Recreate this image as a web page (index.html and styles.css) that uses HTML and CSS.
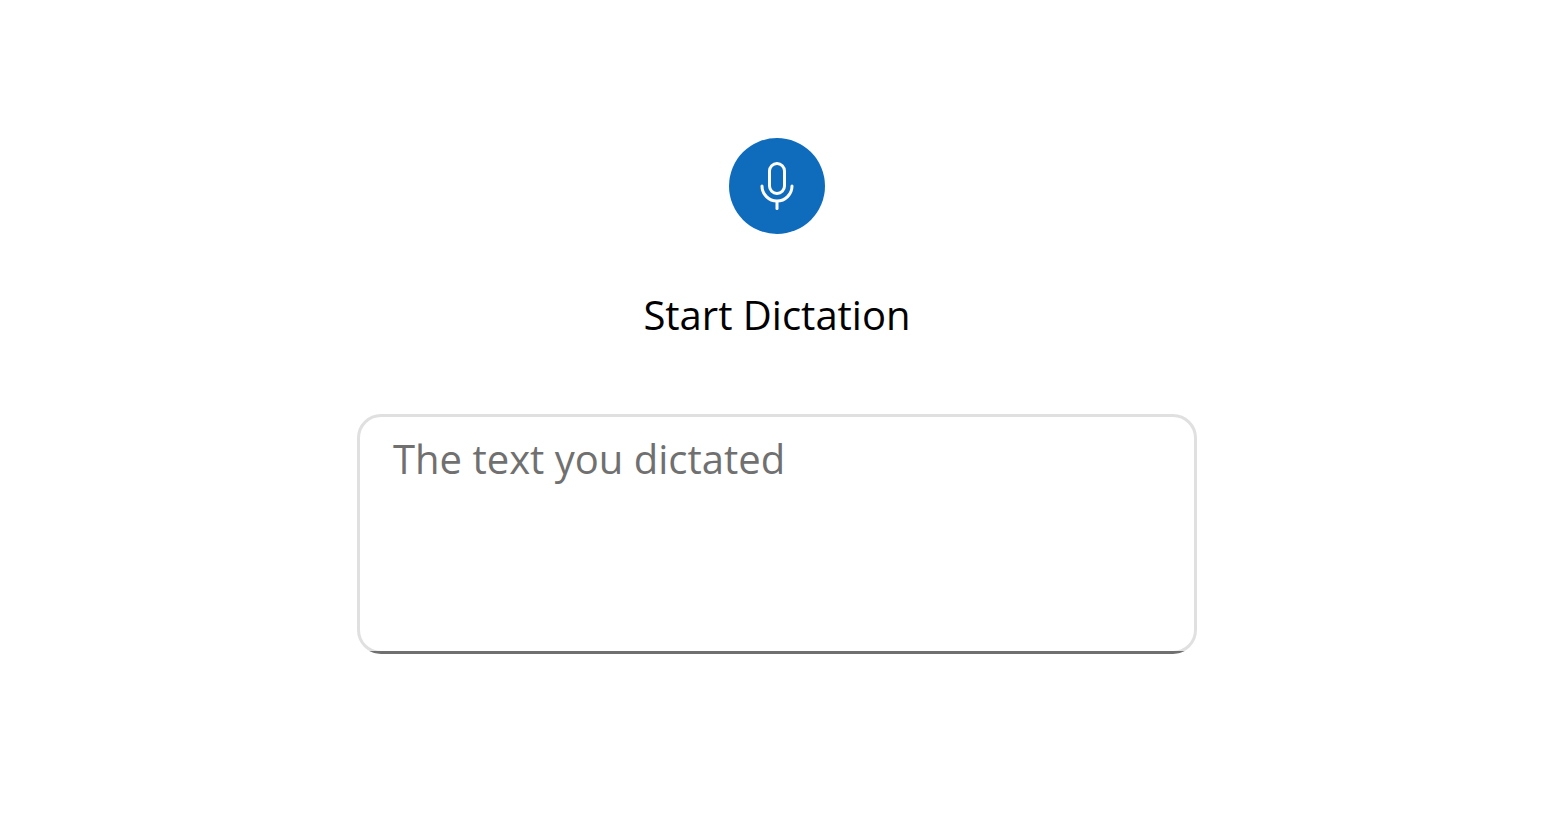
FILE: index.html
```html
<!DOCTYPE html>
<html lang="en">
<head>
<meta charset="utf-8">
<title>Dictation</title>
<link rel="stylesheet" href="styles.css">
</head>
<body>
<main class="dictation">
  <button class="mic-button" type="button" aria-labelledby="mic-label">
    <svg class="mic-icon" viewBox="0 0 48 48" fill="none" stroke="currentColor" stroke-width="3" stroke-linecap="round" aria-hidden="true">
      <rect x="16.500" y="1.500" width="15" height="30" rx="7.500"/>
      <path d="M9 24a15 15 0 0 0 30 0"/>
      <path d="M24 39.500V46.500"/>
    </svg>
  </button>
  <label class="mic-label" id="mic-label" for="dictated">Start Dictation</label>
  <div class="field">
    <textarea class="field-input" id="dictated" placeholder="The text you dictated"></textarea>
  </div>
</main>
</body>
</html>
```

FILE: styles.css
```css
* {
  box-sizing: border-box;
}

body {
  margin: 0;
  background: #fff;
  color: #000;
  font-family: "Segoe UI", "Open Sans", "Noto Sans", sans-serif;
}

.dictation {
  display: flex;
  flex-direction: column;
  align-items: center;
  padding: 138px 30px 24px 24px;
}

.mic-button {
  display: grid;
  place-items: center;
  width: 96px;
  height: 96px;
  padding: 0;
  border: 0;
  border-radius: 50%;
  background: #0f6cbd;
  color: #fff;
}

.mic-icon {
  width: 48px;
  height: 48px;
}

.mic-label {
  height: 42px;
  margin-top: 54px;
  overflow: hidden;
  font-size: 40px;
  line-height: 54px;
  white-space: nowrap;
}

.field {
  position: relative;
  display: flex;
  width: 100%;
  max-width: 840px;
  margin-top: 84px;
  border: 3px solid #e0e0e0;
  border-radius: 24px;
}

/* Dark accent that follows the rounded bottom edge */
.field::after {
  content: "";
  position: absolute;
  inset: -3px;
  border: 3px solid #707070;
  border-radius: 24px;
  clip-path: inset(calc(100% - 3px) 0 0 0);
  pointer-events: none;
}

.field-input {
  flex: 1;
  min-width: 0;
  height: 234px;
  padding: 15px 33px;
  border: 0;
  border-radius: 21px;
  outline: 0;
  background: transparent;
  color: #000;
  font: inherit;
  font-size: 40px;
  line-height: 54px;
  resize: none;
}

.field-input::placeholder {
  color: #707070;
  opacity: 1;
}
```
